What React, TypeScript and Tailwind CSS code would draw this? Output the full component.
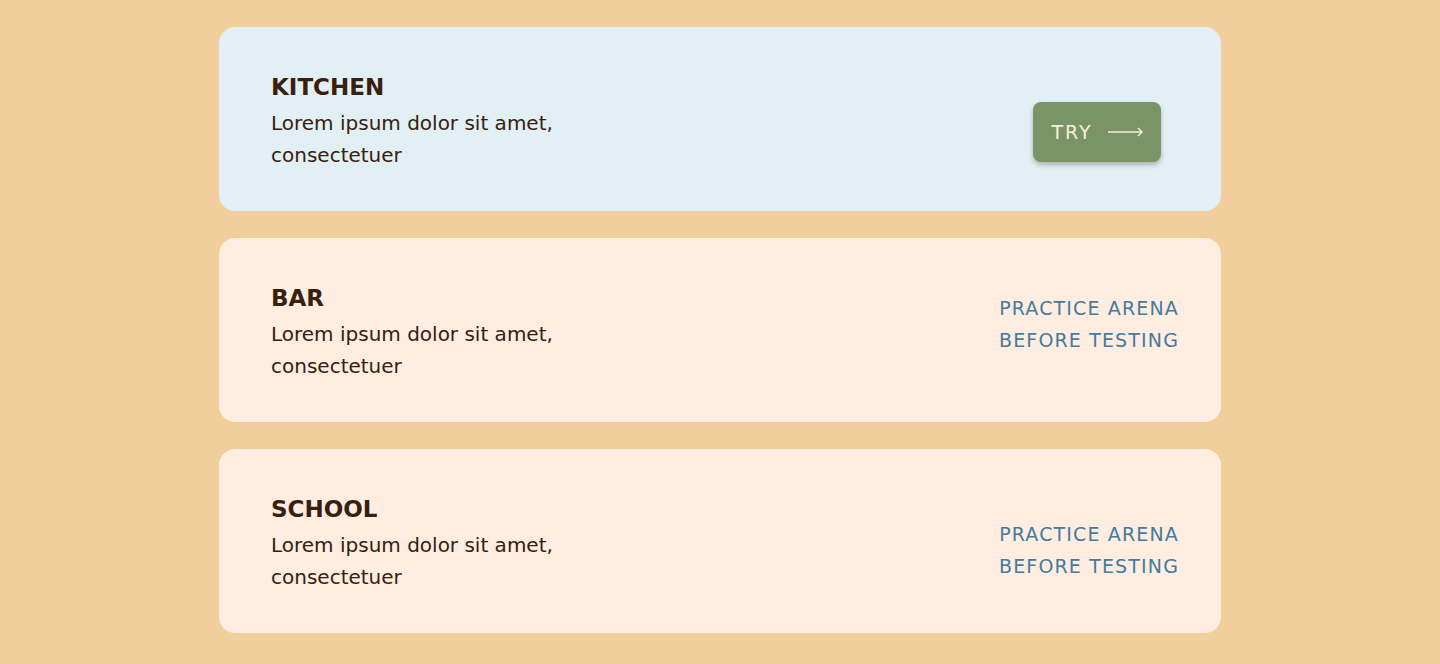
import { ReactNode } from "react";

type Card = { title: string; active?: boolean; noteOffset?: string };

const CARDS: Card[] = [
  { title: "KITCHEN", active: true },
  { title: "BAR", noteOffset: "mb-3" },
  { title: "SCHOOL", noteOffset: "mt-[18px]" },
];

function Arrow() {
  return (
    <svg width="36" height="10" viewBox="0 0 36 10" fill="none" stroke="currentColor" strokeWidth="1.5">
      <path d="M0 5h34" />
      <path d="M30 1l4 4-4 4" />
    </svg>
  );
}

function Row({ card, children }: { card: Card; children: ReactNode }) {
  return (
    <div
      className={`h-[184px] rounded-2xl flex items-center justify-between pl-[52px] ${
        card.active ? "bg-[#e2f0f5] pr-[60px]" : "bg-[#feede0] pr-[42px]"
      }`}
    >
      <div className="flex flex-col text-[#38200f] mt-[4px]">
        <h2 className="text-[23px] font-bold leading-[30px] mb-[5px]">{card.title}</h2>
        <p className="text-[20px] leading-[32px] w-[310px]">Lorem ipsum dolor sit amet, consectetuer</p>
      </div>
      {children}
    </div>
  );
}

export default function App() {
  return (
    <div
      className="min-h-[664px] bg-[#f1cf9d] flex flex-col items-center gap-[27px] pt-[27px] pb-[31px]"
      style={{ fontFamily: '"DejaVu Sans", sans-serif' }}
    >
      {CARDS.map((card) => (
        <div key={card.title} className="w-[1002px]">
          <Row card={card}>
            {card.active ? (
              <button className="mt-[26px] ml-[2px] w-[128px] h-[60px] rounded-lg bg-[#7a9467] text-[#f6efdc] flex items-center justify-center gap-4 text-[19px] tracking-[0.1em] shadow-[0_3px_5px_rgba(0,0,0,0.25)]">
                <span className="ml-[2px]">TRY</span>
                <Arrow />
              </button>
            ) : (
              <div className={`${card.noteOffset} text-center text-[19px] leading-[32px] tracking-[0.06em] text-[#457b9d]`}>
                PRACTICE ARENA
                <br />
                BEFORE TESTING
              </div>
            )}
          </Row>
        </div>
      ))}
    </div>
  );
}
